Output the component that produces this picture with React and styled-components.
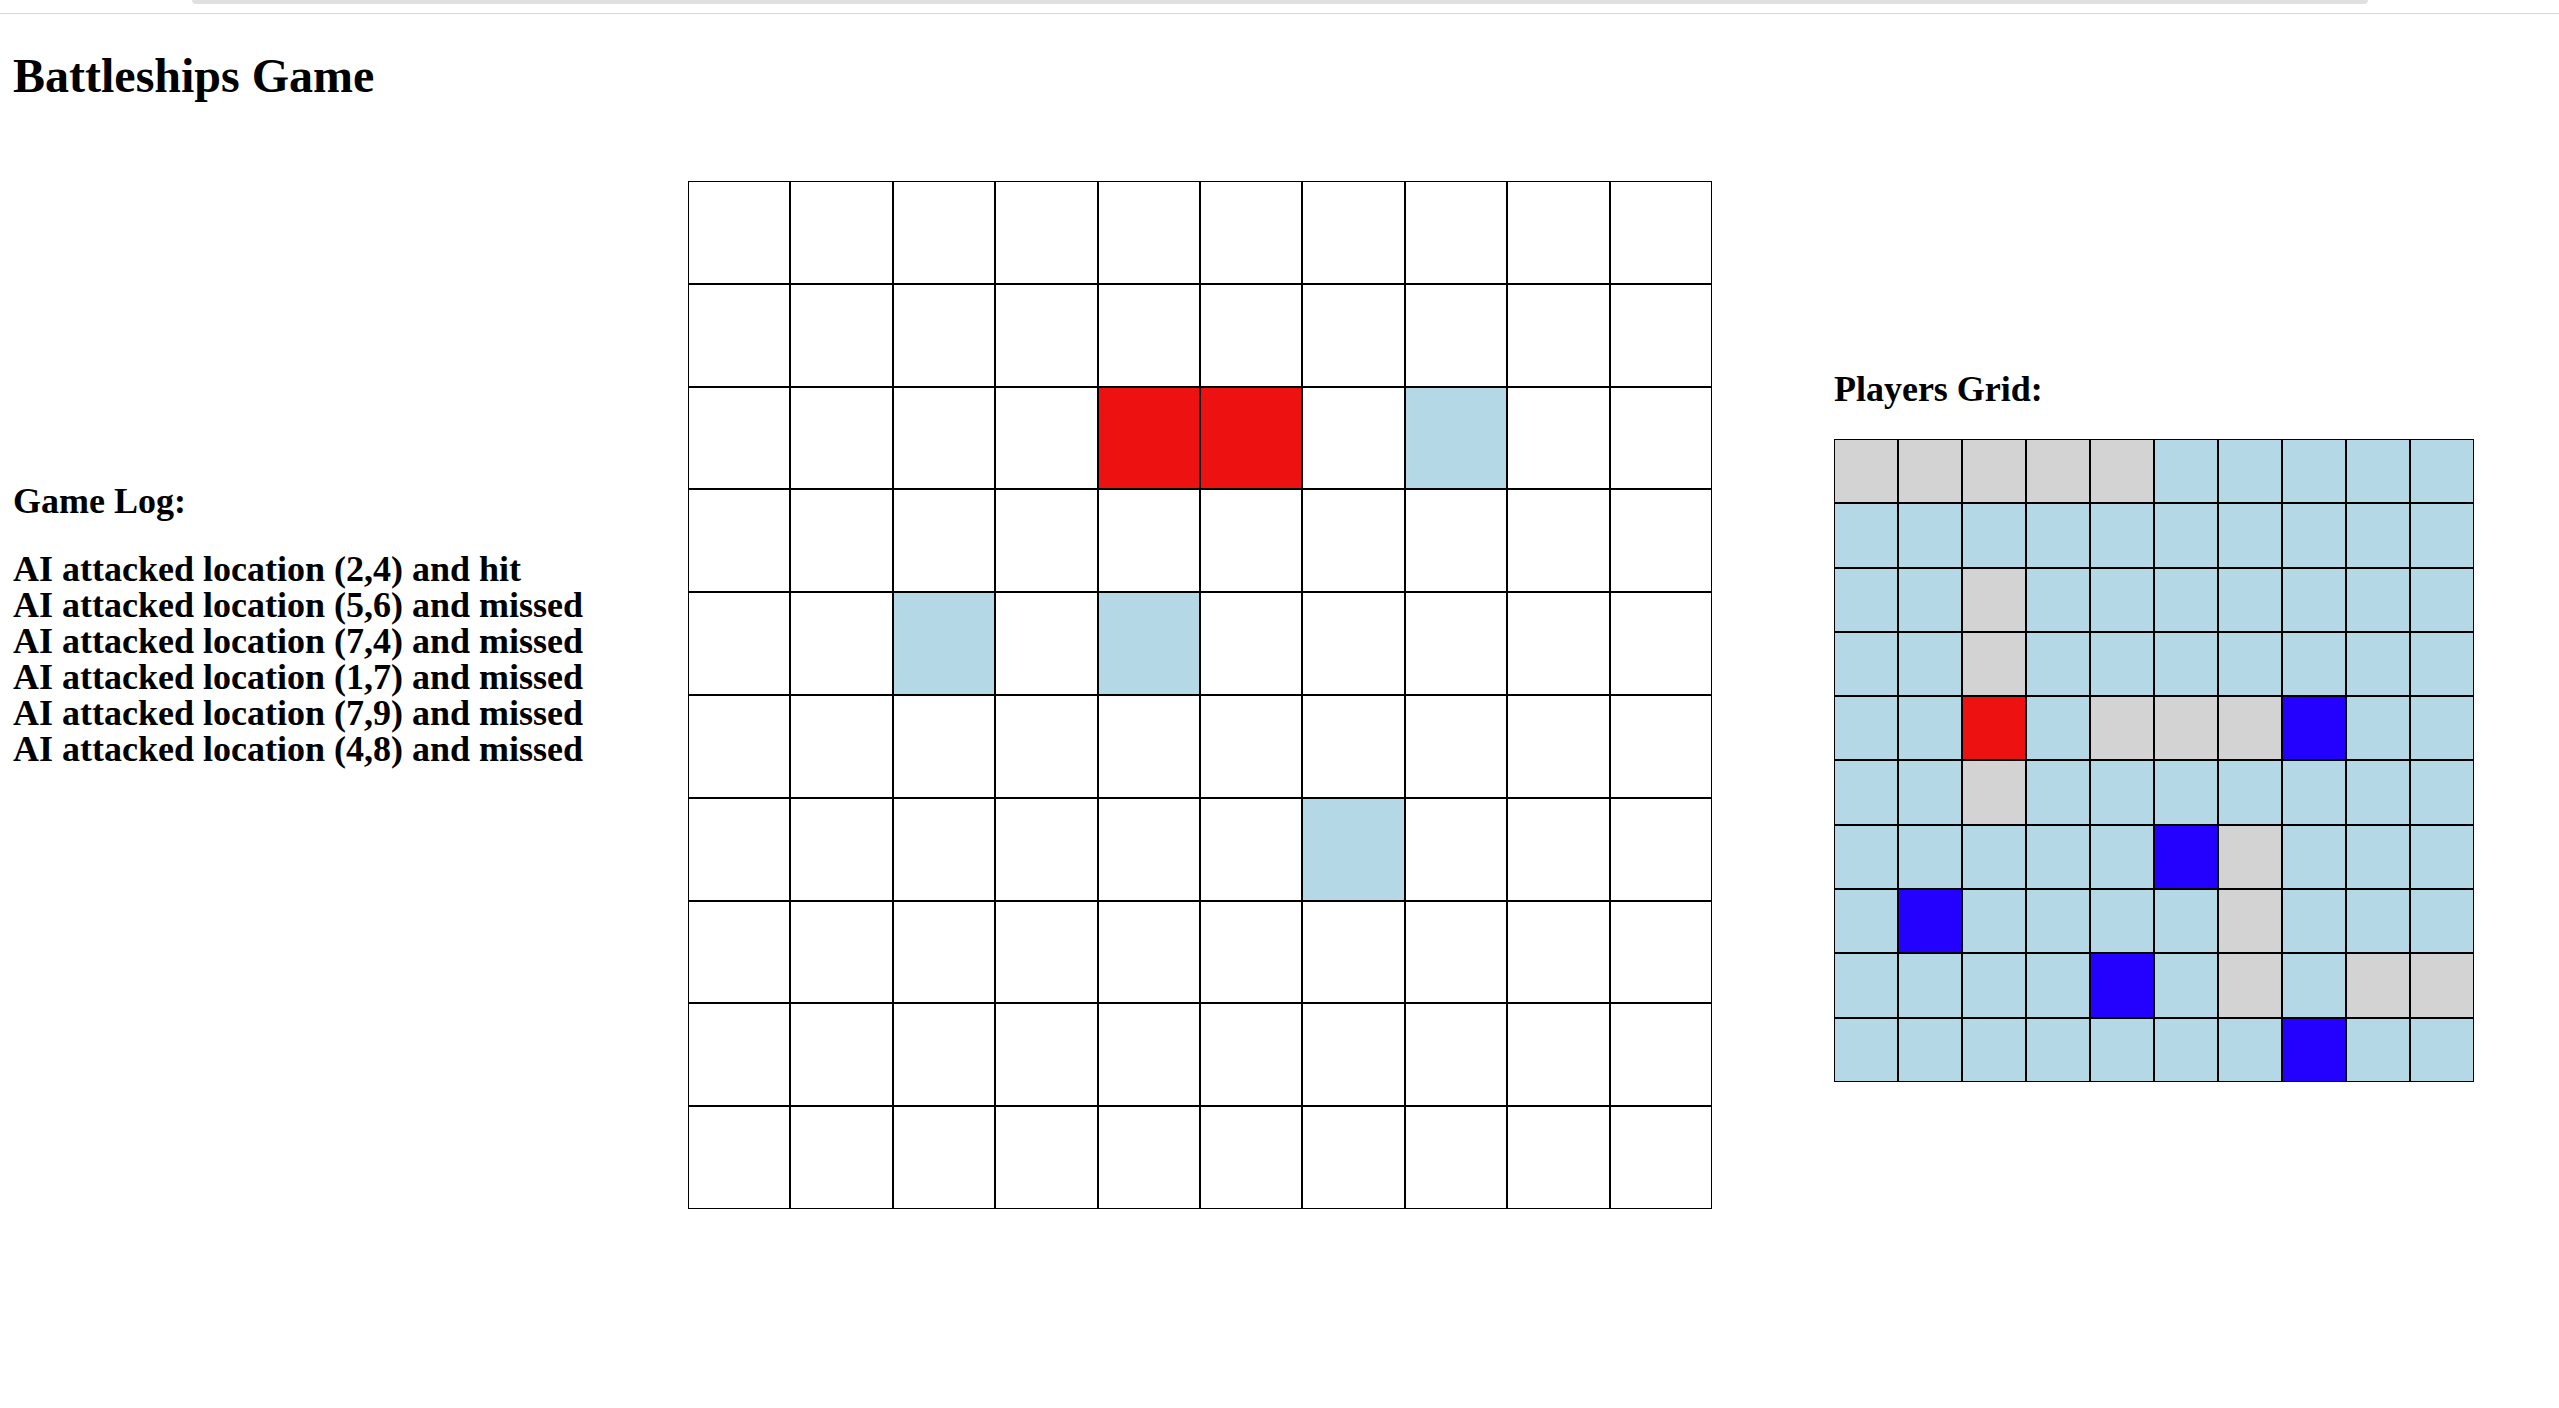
import React from 'react';
import styled, { createGlobalStyle } from 'styled-components';

const GlobalStyle = createGlobalStyle`
  html, body {
    margin: 0;
    background: #ffffff;
  }
  body {
    font-family: "Liberation Serif", "Times New Roman", serif;
    color: #000000;
  }
`;

const COLORS = {
  empty: '#ffffff',
  water: '#b4d8e6',
  miss: '#b4d8e6',
  ship: '#d3d3d3',
  hit: '#ed1111',
  shot: '#2300ff',
};

// attack grid (AI board as seen by player)
const attackMarks = {
  '2-4': 'hit',
  '2-5': 'hit',
  '2-7': 'miss',
  '4-2': 'miss',
  '4-4': 'miss',
  '6-6': 'miss',
};

// players own board
const playerMarks = {
  '0-0': 'ship', '0-1': 'ship', '0-2': 'ship', '0-3': 'ship', '0-4': 'ship',
  '2-2': 'ship', '3-2': 'ship', '4-2': 'hit', '5-2': 'ship',
  '4-4': 'ship', '4-5': 'ship', '4-6': 'ship', '4-7': 'shot',
  '6-5': 'shot', '6-6': 'ship', '7-1': 'shot', '7-6': 'ship',
  '8-4': 'shot', '8-6': 'ship', '8-8': 'ship', '8-9': 'ship',
  '9-7': 'shot',
};

const log = [
  'AI attacked location (2,4) and hit',
  'AI attacked location (5,6) and missed',
  'AI attacked location (7,4) and missed',
  'AI attacked location (1,7) and missed',
  'AI attacked location (7,9) and missed',
  'AI attacked location (4,8) and missed',
];

const cells = Array.from({ length: 100 }, (_, i) => `${Math.floor(i / 10)}-${i % 10}`);

export default function App() {
  return (
    <>
      <GlobalStyle />
      <ChromeEdge>
        <ChromeBar />
      </ChromeEdge>
      <Page>
        <Title>Battleships Game</Title>
        <Board>
          <LogColumn>
            <Heading>Game Log:</Heading>
            <LogList>
              {log.map((line, i) => (
                <LogLine key={i}>{line}</LogLine>
              ))}
            </LogList>
          </LogColumn>

          <AttackGrid>
            {cells.map((key) => (
              <AttackCell key={key} $color={COLORS[attackMarks[key] || 'empty']} />
            ))}
          </AttackGrid>

          <PlayerColumn>
            <PlayerHeading>Players Grid:</PlayerHeading>
            <PlayerGrid>
              {cells.map((key) => (
                <PlayerCell key={key} $color={COLORS[playerMarks[key] || 'water']} />
              ))}
            </PlayerGrid>
          </PlayerColumn>
        </Board>
      </Page>
    </>
  );
}

const ChromeEdge = styled.div`
  position: fixed;
  top: 0;
  left: 0;
  right: 0;
  height: 13px;
  border-bottom: 1px solid #d6d6d6;
  background: #ffffff;
  display: flex;
  justify-content: flex-start;
  padding-left: 192px;
  z-index: 10;
`;

const ChromeBar = styled.div`
  width: 2176px;
  height: 4px;
  background: #e0e0e0;
  border-radius: 0 0 8px 8px;
`;

const Page = styled.div`
  padding: 48px 0 0 13px;
`;

const Title = styled.h1`
  margin: 0;
  font-size: 48px;
  line-height: 56px;
  font-weight: bold;
`;

const Board = styled.div`
  display: flex;
  align-items: flex-start;
  margin-top: 77px;
`;

const LogColumn = styled.div`
  width: 675px;
  margin-top: 302px;
`;

const Heading = styled.div`
  font-size: 36px;
  line-height: 36px;
  font-weight: bold;
`;

const LogList = styled.div`
  margin-top: 32px;
`;

const LogLine = styled.div`
  font-size: 36px;
  line-height: 36px;
  font-weight: bold;
  white-space: nowrap;
`;

const AttackGrid = styled.div`
  display: grid;
  grid-template-columns: repeat(10, 102.4px);
  grid-auto-rows: 102.8px;
`;

const AttackCell = styled.div`
  box-sizing: border-box;
  border: 1px solid #000000;
  background-color: ${(p) => p.$color};
`;

const PlayerColumn = styled.div`
  margin-left: 122px;
  margin-top: 190px;
`;

const PlayerHeading = styled.div`
  font-size: 36px;
  line-height: 36px;
  font-weight: bold;
  margin-bottom: 32px;
`;

const PlayerGrid = styled.div`
  display: grid;
  grid-template-columns: repeat(10, 64px);
  grid-auto-rows: 64.3px;
`;

const PlayerCell = styled.div`
  box-sizing: border-box;
  border: 1px solid #000000;
  background-color: ${(p) => p.$color};
`;
